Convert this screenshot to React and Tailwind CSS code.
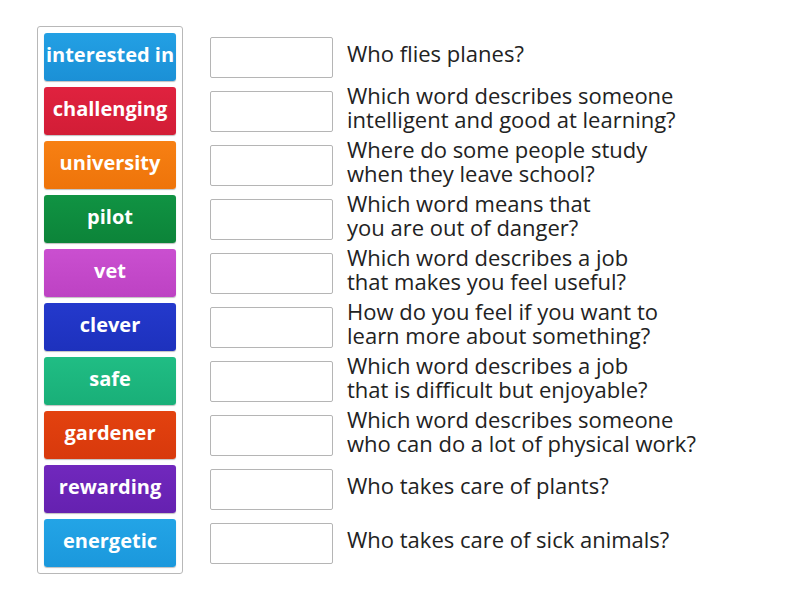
import React from 'react';

const tiles = [
  { word: 'interested in', cls: 'from-[#23a0e4] to-[#1b90d6]' },
  { word: 'challenging', cls: 'from-[#e0223f] to-[#d21d36]' },
  { word: 'university', cls: 'from-[#f78013] to-[#ee740a]' },
  { word: 'pilot', cls: 'from-[#109343] to-[#0c8439]' },
  { word: 'vet', cls: 'from-[#ca4fd0] to-[#bd42c3]' },
  { word: 'clever', cls: 'from-[#2439cc] to-[#1d31bd]' },
  { word: 'safe', cls: 'from-[#20bd84] to-[#19af78]' },
  { word: 'gardener', cls: 'from-[#e3420f] to-[#d8390c]' },
  { word: 'rewarding', cls: 'from-[#7128bd] to-[#6521b0]' },
  { word: 'energetic', cls: 'from-[#23a4e6] to-[#1b98dc]' },
];

const questions = [
  ['Who flies planes?'],
  ['Which word describes someone', 'intelligent and good at learning?'],
  ['Where do some people study', 'when they leave school?'],
  ['Which word means that', 'you are out of danger?'],
  ['Which word describes a job', 'that makes you feel useful?'],
  ['How do you feel if you want to', 'learn more about something?'],
  ['Which word describes a job', 'that is difficult but enjoyable?'],
  ['Which word describes someone', 'who can do a lot of physical work?'],
  ['Who takes care of plants?'],
  ['Who takes care of sick animals?'],
];

export default function App() {
  return (
    <div className="w-[800px] h-[600px] bg-white font-['Open_Sans',sans-serif] flex items-start pl-[37px] pt-[26px]">
      {/* word tiles */}
      <div className="border border-[#b8b8b8] rounded-[3px] p-[6px] flex flex-col gap-[6px]">
        {tiles.map((t) => (
          <div
            key={t.word}
            className={`w-[132px] h-[48px] rounded-[3px] bg-linear-to-b ${t.cls} text-white font-bold text-[20px] flex items-center justify-center pb-[4px] shadow-[0_1px_1px_rgba(0,0,0,0.25)]`}
          >
            {t.word}
          </div>
        ))}
      </div>

      {/* answer boxes + questions */}
      <div className="ml-[27px] pt-[7px] flex flex-col gap-[6px]">
        {questions.map((q, i) => (
          <div key={i} className="h-[48px] flex items-center">
            <div className="w-[123px] h-[41px] border border-[#b5b5b5] rounded-[2px] bg-white shrink-0" />
            <div className="ml-[14px] mb-[8px] text-[22px] leading-[24px] text-[#222]">
              {q.map((line) => (
                <div key={line} className="whitespace-nowrap">{line}</div>
              ))}
            </div>
          </div>
        ))}
      </div>
    </div>
  );
}
